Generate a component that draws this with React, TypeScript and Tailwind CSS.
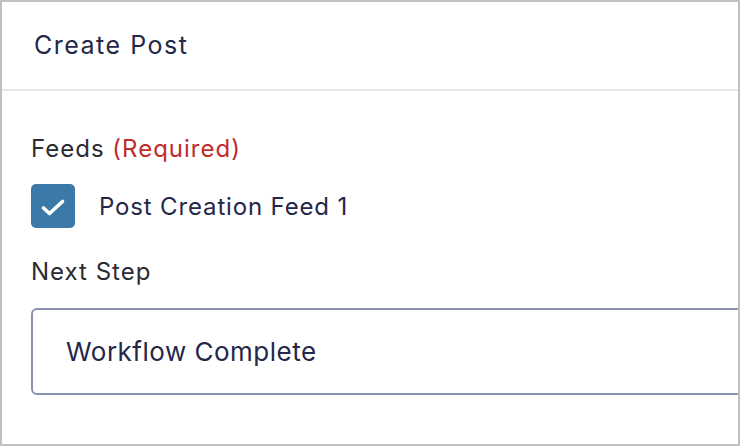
export default function App() {
  return (
    <div className="w-[740px] h-[446px] bg-white border-2 border-[#c0c0c0] overflow-hidden font-['Inter',sans-serif]">
      {/* header */}
      <div className="h-[89px] flex items-center px-8 border-b-2 border-[#e8e6ef]">
        <h2 className="text-[25px] leading-none tracking-[1.5px] text-[#242748] font-normal">Create Post</h2>
      </div>

      <div className="pl-[29px] pt-[46px]">
        <div className="text-[24px] leading-[24px] tracking-[1px] text-[#2a2b33]">
          Feeds <span className="text-[#c02b2b]">(Required)</span>
        </div>

        <label className="mt-[23px] flex items-center gap-6">
          <span className="w-11 h-11 rounded-[5px] bg-[#3b79a8]">
            <svg width="44" height="44" viewBox="0 0 44 44" fill="none">
              <path d="M12.5 24l6 5.5L31.5 17.5" stroke="white" strokeWidth="3.6" strokeLinecap="round" strokeLinejoin="round" />
            </svg>
          </span>
          <span className="pt-[2px] text-[24px] tracking-[0.85px] text-[#242748]">Post Creation Feed 1</span>
        </label>

        <div className="mt-8 text-[24px] leading-[24px] tracking-[1px] text-[#2a2b33]">Next Step</div>

        <div className="mt-6 w-[760px] h-[87px] border-2 border-[#8c90b0] rounded-[6px] flex items-center pl-[33px]">
          <span className="text-[26px] tracking-[0.5px] text-[#242748]">Workflow Complete</span>
        </div>
      </div>
    </div>
  );
}
